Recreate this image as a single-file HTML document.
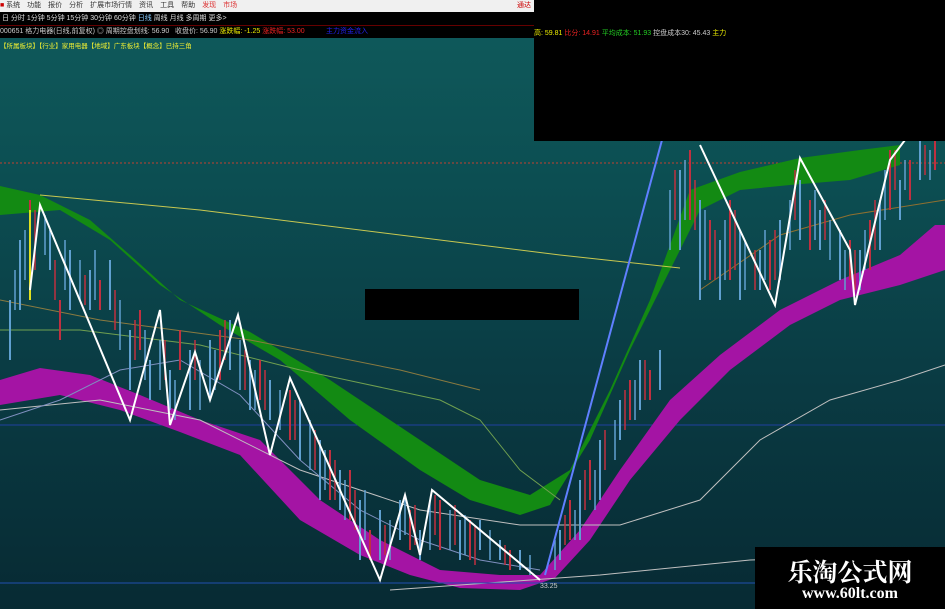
<!DOCTYPE html>
<html><head><meta charset="utf-8"><style>
body{margin:0;width:945px;height:609px;overflow:hidden;font-family:"Liberation Sans","Noto Sans CJK SC",sans-serif;}
#c{position:relative;width:945px;height:609px;background:linear-gradient(#0f5b5c 0%,#0c4e52 30%,#0a3c44 60%,#072a33 100%);}
.bar{position:absolute;left:0;width:945px;font-size:7px;white-space:nowrap;}
</style></head><body><div id="c">
<svg width="945" height="609" style="position:absolute;left:0;top:0">
<line x1="0" y1="163" x2="945" y2="163" stroke="#c04030" stroke-dasharray="2,2" stroke-width="1"/>
<line x1="0" y1="425" x2="945" y2="425" stroke="#2040a0" stroke-width="1"/>
<polygon fill="#138a13" points="0,186 40,195 90,220 130,255 180,300 250,332 330,380 420,440 480,480 530,495 570,470 610,390 650,300 690,190 740,172 800,158 860,150 900,145 900,165 850,180 790,185 740,190 700,210 670,270 630,350 590,440 550,505 520,515 470,500 420,470 350,420 280,360 220,325 160,285 110,240 60,210 0,215"/>
<polygon fill="#a414a4" points="0,380 40,368 90,375 140,395 200,420 260,440 320,500 380,540 440,570 500,575 540,575 580,530 620,470 670,400 720,355 780,310 840,280 900,255 935,225 945,225 945,270 900,285 840,300 790,325 730,370 680,420 630,480 590,540 555,578 520,590 460,588 410,575 360,555 300,520 240,455 180,432 120,410 60,395 0,405"/>
<polyline fill="none" stroke="#c8c850" stroke-width="1" points="40,195 200,210 400,235 560,255 680,268"/>
<polyline fill="none" stroke="#8a7a40" stroke-width="1" points="0,300 100,320 250,340 400,370 480,390"/>
<polyline fill="none" stroke="#70a050" stroke-width="1" points="0,330 80,330 200,345 300,370 440,400 480,420 520,470 560,500"/>
<polyline fill="none" stroke="#c0c0c0" stroke-width="1" points="0,410 100,400 200,420 300,470 420,510 520,525 620,525 700,500 760,440 830,400 900,380 945,365"/>
<polyline fill="none" stroke="#c0c0c0" stroke-width="1" points="390,590 600,575 750,560 945,555"/>
<polyline fill="none" stroke="#907030" stroke-width="1" points="700,290 780,235 850,215 945,200"/>
<polyline fill="none" stroke="#8090c0" stroke-width="1" points="0,420 60,400 120,370 180,360 240,395 300,460 360,510 420,540 480,560 540,570"/>
<g stroke-width="2">
<path stroke="#60a0d0" d="M10 300v60M20 240v70M50 230v40M70 250v60M90 270v40M110 260v50M130 330v60M150 360v40M170 370v40M190 350v60M210 340v60M230 320v50M250 360v50M270 380v40M300 400v60M320 440v60M340 470v40M360 500v60M380 510v50M400 500v40M420 530v30M460 520v40M480 520v30M500 540v20M520 550v20M560 530v30M580 480v60M600 440v60M620 400v40M640 360v50M660 350v40M680 170v80M700 200v100M720 240v60M740 230v70M760 250v40M780 220v60M800 180v60M820 210v40M840 230v50M860 250v40M880 200v50M900 180v40M920 140v40"/>
<path stroke="#c03040" d="M30 200v80M60 300v40M100 280v30M140 310v40M180 330v40M220 330v50M260 360v40M290 390v50M330 450v50M350 470v50M370 530v30M410 510v40M440 500v50M470 520v40M510 550v20M570 500v40M590 460v40M630 380v40M650 370v30M690 150v70M710 220v60M730 200v80M770 240v50M810 200v50M850 240v40M870 220v50M890 150v60M910 160v40M935 140v30"/>
</g>
<g stroke-width="1.5">
<path stroke="#60a0d0" d="M15 270v40M25 230v50M45 215v40M65 240v50M80 260v40M95 250v50M120 300v50M145 330v50M160 340v50M175 380v40M200 360v50M215 350v40M240 340v50M255 370v40M280 390v40M310 420v50M325 450v40M345 480v40M365 490v50M390 520v40M405 495v40M430 500v50M450 510v40M465 515v40M490 530v30M530 555v20M555 540v30M575 510v30M595 470v40M615 420v40M635 380v40M670 190v60M685 160v60M705 210v70M725 220v60M745 240v50M765 230v50M790 200v50M815 190v50M830 220v40M845 250v40M865 230v40M885 170v50M905 160v30M930 150v30"/>
<path stroke="#c03040" d="M35 210v60M55 260v40M85 275v30M115 290v40M135 320v40M165 340v40M195 340v40M225 320v40M245 350v40M265 370v40M295 400v40M315 430v40M335 460v40M355 490v40M385 525v30M415 505v40M435 495v40M455 505v40M475 525v40M505 545v20M565 515v30M585 470v40M605 430v40M625 390v40M645 360v40M675 170v50M695 180v50M715 230v50M735 210v60M755 250v40M775 230v50M795 170v50M825 200v40M855 250v40M875 200v50M895 150v40M925 145v30"/>
</g>
<polyline fill="none" stroke="#e0e020" stroke-width="2" points="30,210 30,300"/>
<polyline fill="none" stroke="#ffffff" stroke-width="2" points="30,290 40,205 130,420 160,310 170,425 195,352 210,400 238,315 270,455 290,378 380,580 405,495 420,555 432,490 540,580"/>
<polyline fill="none" stroke="#ffffff" stroke-width="2" points="700,145 775,305 800,158 850,250 855,305 890,160 905,140"/>
<line x1="545" y1="575" x2="662" y2="140" stroke="#6080ff" stroke-width="2"/>
<line x1="0" y1="583" x2="945" y2="583" stroke="#2050b0" stroke-width="1"/>
<text x="540" y="588" fill="#ccc" font-size="7">33.25</text>
</svg>
<div class="bar" style="top:0;height:12px;background:#f0f0f0;color:#333;"><span style="color:#c00">■</span> 系统　功能　报价　分析　扩展市场行情　资讯　工具　帮助　<span style="color:#d33">发现　市场</span><span style="position:absolute;right:414px;color:#c00">通达</span></div>
<div class="bar" style="top:12px;height:13px;background:#000;color:#ddd;line-height:13px;border-bottom:1px solid #600">&nbsp;日 分时 1分钟 5分钟 15分钟 30分钟 60分钟 <span style="color:#8cf">日线</span> 周线 月线 多周期 更多&gt;</div>
<div class="bar" style="top:26px;height:12px;background:#000;color:#ccc;line-height:12px">000651 格力电器(日线,前复权) ◎ 周期控盘划线: 56.90 &nbsp; 收盘价: 56.90 <span style="color:#ee0">涨跌幅: -1.25</span> <span style="color:#e22">涨跌幅: 53.00</span> &nbsp;&nbsp;&nbsp;&nbsp;&nbsp;&nbsp;&nbsp;&nbsp;&nbsp; <span style="color:#22e">主力资金流入</span></div>
<div class="bar" style="top:40px;height:10px;color:#ee3;font-size:6.5px">【所属板块】【行业】家用电器【地域】广东板块【概念】已持三角</div>
<div style="position:absolute;left:534px;top:0;width:411px;height:141px;background:#000"></div>
<div style="position:absolute;left:534px;top:28px;width:411px;font-size:7px;color:#ccc;white-space:nowrap"><span style="color:#ee0">高: 59.81</span> <span style="color:#e22">比分: 14.91</span> <span style="color:#2c2">平均成本: 51.93</span> 控盘成本30: 45.43 <span style="color:#ee0">主力</span></div>
<div style="position:absolute;left:365px;top:289px;width:214px;height:31px;background:#000"></div>
<div style="position:absolute;left:755px;top:547px;width:190px;height:62px;background:#000;color:#fff;text-align:center">
<div style="font-family:'Noto Serif CJK SC','Noto Sans CJK SC',serif;font-size:25px;font-weight:bold;line-height:30px;margin-top:9px">乐淘公式网</div>
<div style="font-family:'Liberation Serif',serif;font-size:16px;font-weight:bold;line-height:16px">www.60lt.com</div></div>
</div></body></html>
